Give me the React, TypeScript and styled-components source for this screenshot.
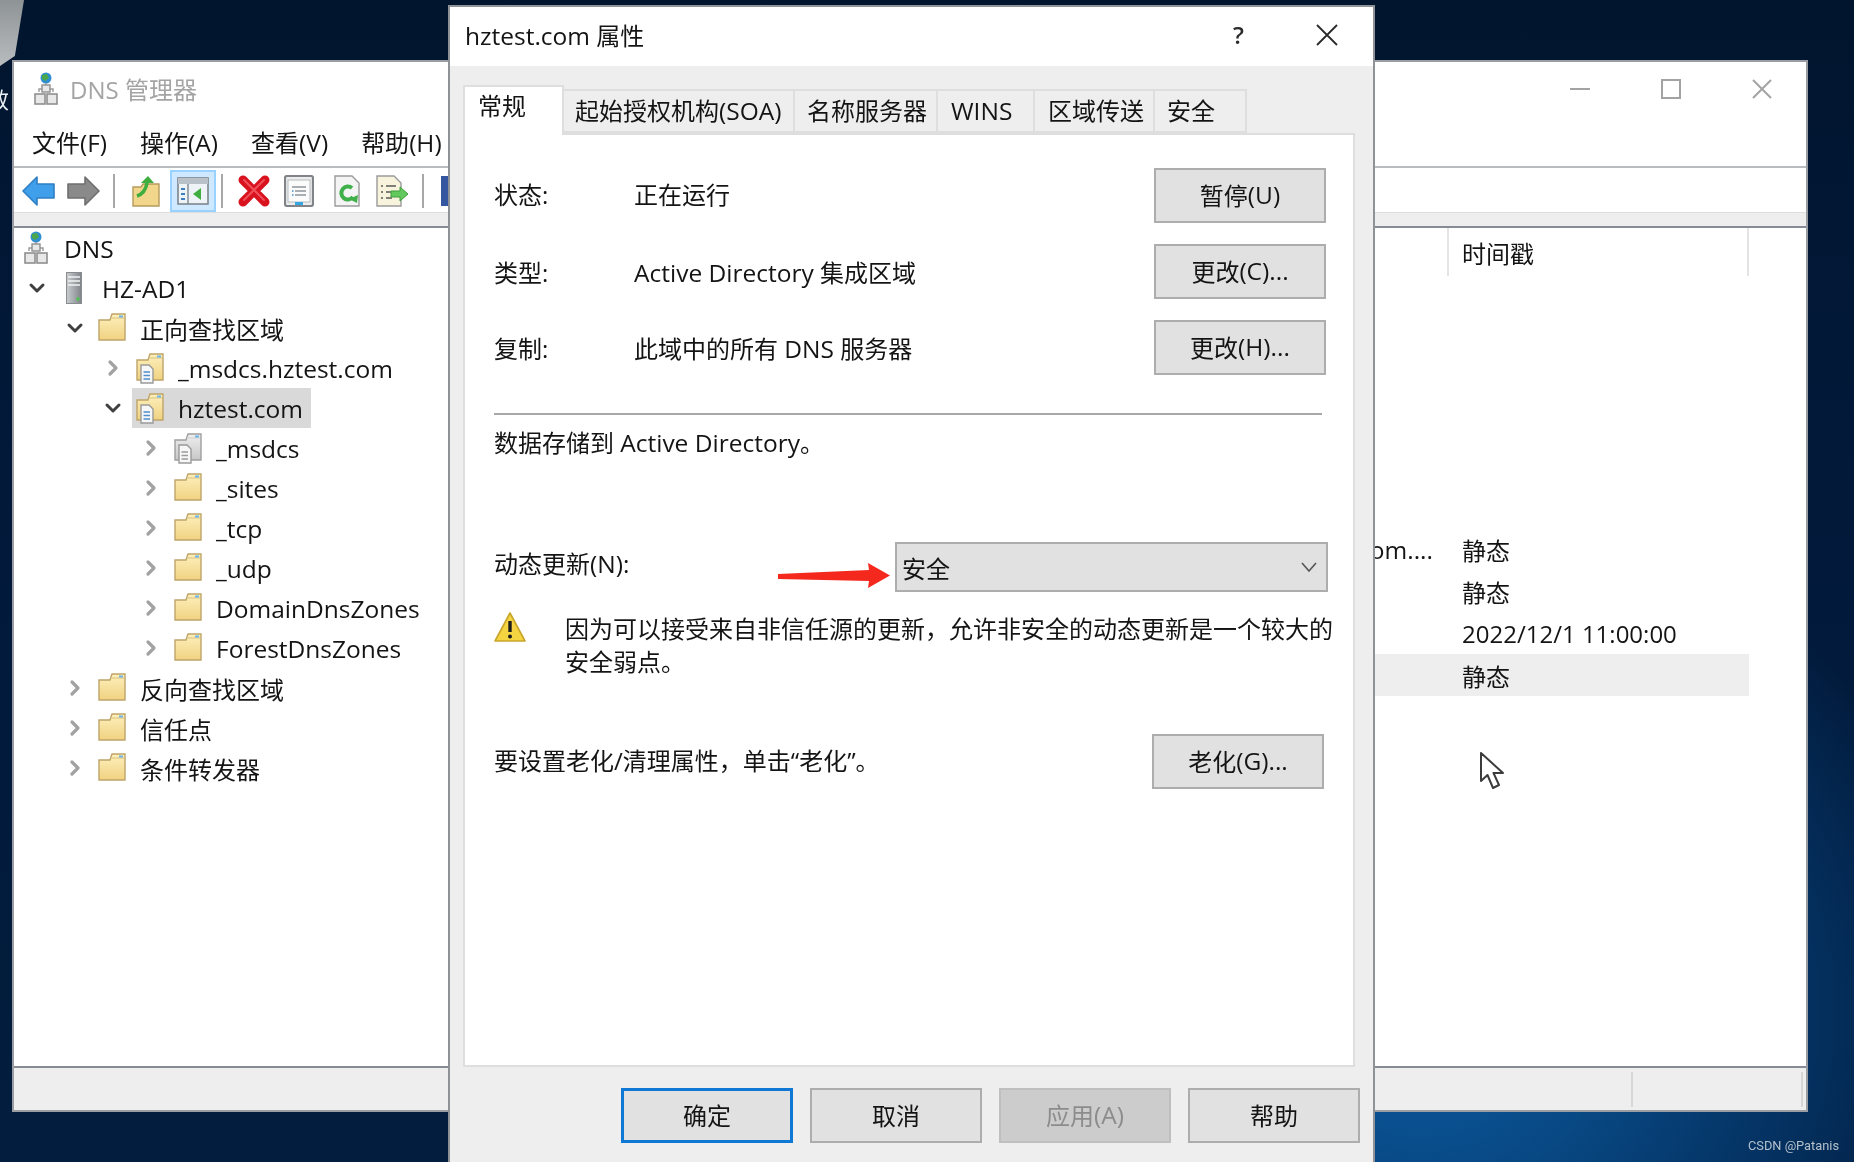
import React from 'react'
import styled, { createGlobalStyle } from 'styled-components'
import { ChevronDown, ChevronRight } from 'lucide-react'

const GlobalStyle = createGlobalStyle`
  html, body {
    margin: 0;
    padding: 0;
    overflow: hidden;
    background: #02162f;
  }
  * {
    box-sizing: border-box;
  }
`

type IconKind = 'dns' | 'server' | 'folder' | 'zone' | 'grayzone'

type TreeNode = {
  level: number
  label: string
  icon: IconKind
  open?: boolean
  selected?: boolean
  latin?: boolean
}

const tree: TreeNode[] = [
  { level: 0, label: 'HZ-AD1', icon: 'server', open: true, latin: true },
  { level: 1, label: '正向查找区域', icon: 'folder', open: true },
  { level: 2, label: '_msdcs.hztest.com', icon: 'zone', latin: true },
  { level: 2, label: 'hztest.com', icon: 'zone', open: true, selected: true, latin: true },
  { level: 3, label: '_msdcs', icon: 'grayzone', latin: true },
  { level: 3, label: '_sites', icon: 'folder', latin: true },
  { level: 3, label: '_tcp', icon: 'folder', latin: true },
  { level: 3, label: '_udp', icon: 'folder', latin: true },
  { level: 3, label: 'DomainDnsZones', icon: 'folder', latin: true },
  { level: 3, label: 'ForestDnsZones', icon: 'folder', latin: true },
  { level: 1, label: '反向查找区域', icon: 'folder' },
  { level: 1, label: '信任点', icon: 'folder' },
  { level: 1, label: '条件转发器', icon: 'folder' },
]

const records = [
  { name: '', stamp: '' },
  { name: '', stamp: '' },
  { name: '', stamp: '' },
  { name: '', stamp: '' },
  { name: '', stamp: '' },
  { name: '', stamp: '' },
  { name: 'om....', stamp: '静态' },
  { name: '', stamp: '静态' },
  { name: '', stamp: '2022/12/1 11:00:00' },
  { name: '', stamp: '静态', hover: true },
]

const DnsIcon = () => (
  <svg width="24" height="34" viewBox="0 0 24 34">
    <circle cx="12" cy="6" r="5.5" fill="#2f8fd0" />
    <path d="M8 3 L13 2 L15 6 L11 9 L8 7Z" fill="#4aa84a" />
    <path d="M12 11 V16 M5 20 V17 H19 V20" fill="none" stroke="#9a9a9a" strokeWidth="1.4" />
    <rect x="8" y="13" width="8" height="7" fill="#e8e8e8" stroke="#8f8f8f" strokeWidth="1.4" />
    <rect x="1" y="22" width="10" height="10" fill="#e8e8e8" stroke="#8f8f8f" strokeWidth="1.6" />
    <rect x="13" y="22" width="10" height="10" fill="#e8e8e8" stroke="#8f8f8f" strokeWidth="1.6" />
  </svg>
)

const ServerIcon = () => (
  <svg width="16" height="32" viewBox="0 0 16 32">
    <defs>
      <linearGradient id="srv" x1="0" x2="1" y1="0" y2="0">
        <stop offset="0" stopColor="#c9cdd0" />
        <stop offset="1" stopColor="#7f8488" />
      </linearGradient>
    </defs>
    <rect x="0.5" y="0.5" width="15" height="31" fill="url(#srv)" stroke="#8a8d90" />
    <path d="M2 5 H14 M2 9 H14 M2 13 H14" stroke="#f2f2f2" strokeWidth="1.6" />
    <circle cx="12" cy="27" r="1.8" fill="#4fc24f" />
  </svg>
)

const FolderIcon = ({ gray, zone }: { gray?: boolean; zone?: boolean }) => {
  const id = gray ? 'fg' : 'fy'
  return (
    <svg width="28" height="32" viewBox="0 0 28 32">
      <defs>
        <linearGradient id={id} x1="0" x2="0" y1="0" y2="1">
          <stop offset="0" stopColor={gray ? '#efefef' : '#fdf0be'} />
          <stop offset="1" stopColor={gray ? '#c8c8c8' : '#f0d280'} />
        </linearGradient>
      </defs>
      <path d="M1 8 H12 L14 2 H27 V28 H1Z" fill={`url(#${id})`} stroke={gray ? '#9f9f9f' : '#bfa468'} strokeWidth="1.4" />
      <path d="M13 6 H26" stroke={gray ? '#d9d9d9' : '#e6cf92'} strokeWidth="1.5" />
      <rect x="21" y="3.5" width="4" height="2" fill="#69b4e8" />
      {zone && (
        <g>
          <path d="M5 13 H13 L17 17 V31 H5Z" fill="#f7f7f7" stroke="#9a9a9a" strokeWidth="1.4" />
          <path d="M7.5 20 H14 M7.5 23.5 H14 M7.5 27 H14" stroke={gray ? '#9a9a9a' : '#4f8fd0'} strokeWidth="1.5" />
        </g>
      )}
    </svg>
  )
}

const TreeIcon = ({ kind }: { kind: IconKind }) => {
  if (kind === 'dns') return <DnsIcon />
  if (kind === 'server') return <ServerIcon />
  if (kind === 'zone') return <FolderIcon zone />
  if (kind === 'grayzone') return <FolderIcon gray zone />
  return <FolderIcon />
}

const ArrowIcon = ({ dir, color, edge }: { dir: 'left' | 'right'; color: string; edge: string }) => (
  <svg width="33" height="30" viewBox="0 0 33 30">
    <path
      d={dir === 'left' ? 'M1 15 L15 1 V8 H32 V22 H15 V29Z' : 'M32 15 L18 1 V8 H1 V22 H18 V29Z'}
      fill={color}
      stroke={edge}
      strokeWidth="1.6"
      strokeLinejoin="round"
    />
  </svg>
)

const UpFolderIcon = () => (
  <svg width="28" height="32" viewBox="0 0 28 32">
    <path d="M1 12 H9 L11 9 H27 V31 H1Z" fill="#f1d68c" stroke="#b59a5c" strokeWidth="1.4" />
    <path d="M5 21 C11 19 14 14 15 8" fill="none" stroke="#3fae3f" strokeWidth="3.6" />
    <path d="M9 8 L16 1 L22 8Z" fill="#3fae3f" />
  </svg>
)

const ConsoleIcon = () => (
  <svg width="32" height="28" viewBox="0 0 32 28">
    <rect x="1" y="1" width="30" height="26" fill="#eef3f7" stroke="#7d868e" strokeWidth="1.6" />
    <rect x="1" y="1" width="30" height="6" fill="#b8c0c8" />
    <path d="M11 7 V27" stroke="#7d868e" strokeWidth="1.4" />
    <path d="M4 12 H8 M4 17 H8 M4 22 H8" stroke="#3f7fc0" strokeWidth="2" />
    <path d="M24 11 V23 L16 17Z" fill="#3fae3f" />
  </svg>
)

const DeleteIcon = () => (
  <svg width="32" height="32" viewBox="0 0 32 32">
    <path d="M5 5 L27 27 M27 5 L5 27" stroke="#d9121f" strokeWidth="9" strokeLinecap="round" />
    <path d="M6 5 L26 25 M26 5 L6 25" stroke="#f0505a" strokeWidth="2" strokeLinecap="round" />
  </svg>
)

const PropsIcon = () => (
  <svg width="30" height="32" viewBox="0 0 30 32">
    <rect x="1" y="1" width="28" height="30" rx="2" fill="#ececec" stroke="#808488" strokeWidth="2.2" />
    <rect x="4" y="5" width="22" height="22" fill="#fbfbfb" stroke="#b5b9bd" />
    <path d="M8 12 H22 M11 16 H22 M11 20 H22" stroke="#8f959a" strokeWidth="1.4" />
    <path d="M8 16 H9.5 M8 20 H9.5" stroke="#3f8fd0" strokeWidth="1.6" />
    <rect x="11" y="27" width="8" height="3" fill="#35a6e0" />
  </svg>
)

const RefreshIcon = () => (
  <svg width="26" height="32" viewBox="0 0 26 32">
    <path d="M1 1 H18 L25 8 V31 H1Z" fill="#f4f4f4" stroke="#9a9a9a" strokeWidth="1.4" />
    <path d="M19 22 A6.5 6.5 0 1 1 18 13" fill="none" stroke="#3fb04a" strokeWidth="4" />
    <path d="M15 24 L24 20 L23 28Z" fill="#3fb04a" />
  </svg>
)

const ExportIcon = () => (
  <svg width="33" height="32" viewBox="0 0 33 32">
    <path d="M1 1 H18 L25 8 V31 H1Z" fill="#f8f3dc" stroke="#9a9a9a" strokeWidth="1.4" />
    <path d="M5 11 H7 M10 11 H20 M5 17 H7 M10 17 H16 M5 23 H7 M10 23 H16" stroke="#5a5a5a" strokeWidth="1.6" />
    <path d="M15 16 H24 V12 L32 19 L24 26 V22 H15Z" fill="#62c95c" stroke="#3f9f3f" />
  </svg>
)

const WarningIcon = () => (
  <WarningGlyph viewBox="0 0 32 30">
    <path d="M16 1 L31 29 H1Z" fill="#f5d442" stroke="#c9a52a" strokeWidth="1.6" strokeLinejoin="round" />
    <path d="M16 9 V20" stroke="#1c1c1c" strokeWidth="3.4" />
    <circle cx="16" cy="24.5" r="2" fill="#1c1c1c" />
  </WarningGlyph>
)

export default function App() {
  return (
    <Stage>
      <GlobalStyle />
      <RecycleBin />
      <DesktopLabel>效</DesktopLabel>

      <MainWindow>
        <MainTitleBar>
          <DnsIcon />
          <MainTitle>DNS 管理器</MainTitle>
          <WindowControls>
            <MinimizeGlyph />
            <MaximizeGlyph />
            <CloseGlyph viewBox="0 0 20 20">
              <path d="M1 1 L19 19 M19 1 L1 19" stroke="#a3a3a3" strokeWidth="2" />
            </CloseGlyph>
          </WindowControls>
        </MainTitleBar>

        <MenuBar>
          <MenuItem>文件<Latin>(F)</Latin></MenuItem>
          <MenuItem>操作<Latin>(A)</Latin></MenuItem>
          <MenuItem>查看<Latin>(V)</Latin></MenuItem>
          <MenuItem>帮助<Latin>(H)</Latin></MenuItem>
        </MenuBar>

        <Toolbar>
          <ToolSlot $left={8}><ArrowIcon dir="left" color="#3f9fea" edge="#2f7fc4" /></ToolSlot>
          <ToolSlot $left={12}><ArrowIcon dir="right" color="#8a8a8a" edge="#6f6f6f" /></ToolSlot>
          <ToolDivider $left={13} />
          <ToolSlot $left={17}><UpFolderIcon /></ToolSlot>
          <ActiveTool><ConsoleIcon /></ActiveTool>
          <ToolDivider $left={5} />
          <ToolSlot $left={15}><DeleteIcon /></ToolSlot>
          <ToolSlot $left={14}><PropsIcon /></ToolSlot>
          <ToolSlot $left={20}><RefreshIcon /></ToolSlot>
          <ToolSlot $left={16}><ExportIcon /></ToolSlot>
          <ToolDivider $left={13} />
          <HelpTool />
        </Toolbar>
        <ToolStrip />

        <Content>
          <TreePane>
            <RootRow>
              <TreeLabelBox>
                <IconBox><DnsIcon /></IconBox>
                <Latin>DNS</Latin>
              </TreeLabelBox>
            </RootRow>
            {tree.map((node, i) => (
              <TreeRow key={i} $level={node.level}>
                <Expander>
                  {node.open ? (
                    <ChevronDown size={30} strokeWidth={3} color="#404040" />
                  ) : (
                    <ChevronRight size={30} strokeWidth={3.2} color="#a2a2a2" />
                  )}
                </Expander>
                <TreeLabelBox $selected={node.selected}>
                  <IconBox><TreeIcon kind={node.icon} /></IconBox>
                  {node.latin ? <Latin>{node.label}</Latin> : node.label}
                </TreeLabelBox>
              </TreeRow>
            ))}
          </TreePane>

          <ListPane>
            <ListHeader>
              <HeaderCell />
              <HeaderCell>时间戳</HeaderCell>
            </ListHeader>
            {records.map((r, i) => (
              <ListRow key={i} $hover={r.hover}>
                <NameCell><Latin>{r.name}</Latin></NameCell>
                <StampCell>{r.stamp}</StampCell>
              </ListRow>
            ))}
          </ListPane>
        </Content>

        <StatusBar>
          <StatusCell $grow />
          <StatusCell />
        </StatusBar>
      </MainWindow>

      <PointerIcon viewBox="0 0 26 40">
        <path
          d="M2 2 V30 L8.5 24 L14 37 L20 34 L14.5 22 L24 22Z"
          fill="#ffffff"
          stroke="#3c3c3c"
          strokeWidth="2"
          strokeLinejoin="round"
        />
      </PointerIcon>

      <Dialog>
        <DialogTitleBar>
          <DialogTitle><Latin>hztest.com</Latin> 属性</DialogTitle>
          <HelpGlyph>?</HelpGlyph>
          <DialogClose viewBox="0 0 22 22">
            <path d="M1 1 L21 21 M21 1 L1 21" stroke="#2a2a2a" strokeWidth="1.8" />
          </DialogClose>
        </DialogTitleBar>

        <DialogBody>
          <Tabs>
            <Tab $active $width={101}>常规</Tab>
            <Tab $width={231}>起始授权机构<Latin>(SOA)</Latin></Tab>
            <Tab $width={143} $pad={12}>名称服务器</Tab>
            <Tab $width={97} $pad={13}><Latin>WINS</Latin></Tab>
            <Tab $width={120} $pad={13}>区域传送</Tab>
            <Tab $width={92} $pad={12}>安全</Tab>
          </Tabs>

          <TabPanel>
            <InfoRow>
              <FieldLabel $lift>状态:</FieldLabel>
              <FieldValue $lift>正在运行</FieldValue>
              <Button>暂停<Latin>(U)</Latin></Button>
            </InfoRow>
            <InfoRow>
              <FieldLabel>类型:</FieldLabel>
              <FieldValue><Latin>Active Directory</Latin> 集成区域</FieldValue>
              <Button>更改<Latin>(C)...</Latin></Button>
            </InfoRow>
            <InfoRow>
              <FieldLabel>复制:</FieldLabel>
              <FieldValue>此域中的所有 <Latin>DNS</Latin> 服务器</FieldValue>
              <Button>更改<Latin>(H)...</Latin></Button>
            </InfoRow>

            <Rule />
            <StorageNote>数据存储到 <Latin>Active Directory</Latin>。</StorageNote>

            <UpdateRow>
              <UpdateLabel>动态更新<Latin>(N):</Latin></UpdateLabel>
              <Combo>
                安全
                <ComboArrow viewBox="0 0 16 10">
                  <path d="M1 1 L8 9 L15 1" fill="none" stroke="#555" strokeWidth="1.6" />
                </ComboArrow>
              </Combo>
              <RedArrow viewBox="0 0 112 25">
                <path d="M0 11 L91 7 L90 0 L112 12.5 L90 25 L91 18 L0 16Z" fill="#f5281e" />
              </RedArrow>
            </UpdateRow>

            <WarningRow>
              <WarningIcon />
              <WarningText>
                因为可以接受来自非信任源的更新，允许非安全的动态更新是一个较大的安全弱点。
              </WarningText>
            </WarningRow>

            <AgingRow>
              <AgingText>要设置老化/清理属性，单击“老化”。</AgingText>
              <Button>老化<Latin>(G)...</Latin></Button>
            </AgingRow>
          </TabPanel>

          <DialogFooter>
            <Button $primary>确定</Button>
            <Button>取消</Button>
            <Button $disabled>应用<Latin>(A)</Latin></Button>
            <Button>帮助</Button>
          </DialogFooter>
        </DialogBody>
      </Dialog>

      <Watermark>CSDN @Patanis</Watermark>
    </Stage>
  )
}

const Stage = styled.div`
  position: relative;
  width: 1854px;
  height: 1162px;
  overflow: hidden;
  filter: blur(0.55px);
  color: #141414;
  font-family: 'Open Sans', 'Noto Sans CJK SC', sans-serif;
  font-size: 24px;
  background:
    radial-gradient(560px 520px at 1420px 1010px, #0c5ba3 0%, #084883 35%, #04305f 70%, rgba(3, 36, 74, 0) 100%),
    linear-gradient(180deg, #01152e 0%, #02193a 40%, #021d3d 100%);
`

const Latin = styled.span`
  font-size: 24.5px;
`

const RecycleBin = styled.div`
  position: absolute;
  left: 0;
  top: 0;
  width: 24px;
  height: 66px;
  background: linear-gradient(180deg, #8e9396, #b8bcbe);
  clip-path: polygon(0 0, 100% 0, 62% 85%, 0 100%);
`

const DesktopLabel = styled.div`
  position: absolute;
  left: -13px;
  top: 82px;
  color: #e8eef4;
  font-size: 22px;
`

const MainWindow = styled.div`
  position: absolute;
  left: 12px;
  top: 60px;
  width: 1796px;
  height: 1052px;
  display: flex;
  flex-direction: column;
  background: #fff;
  border: 2px solid #9a9ea3;
`

const MainTitleBar = styled.div`
  height: 63px;
  flex: none;
  display: flex;
  align-items: center;
  padding: 0 34px 10px 20px;
`

const MainTitle = styled.div`
  margin-left: 12px;
  color: #a4a4a4;
  font-size: 24px;
`

const WindowControls = styled.div`
  margin-left: auto;
  display: flex;
  align-items: center;
  gap: 71px;
`

const MinimizeGlyph = styled.div`
  width: 20px;
  height: 2px;
  background: #a3a3a3;
`

const MaximizeGlyph = styled.div`
  width: 20px;
  height: 20px;
  border: 2px solid #a3a3a3;
`

const CloseGlyph = styled.svg`
  width: 20px;
  height: 20px;
`

const MenuBar = styled.div`
  height: 43px;
  flex: none;
  display: flex;
  gap: 33px;
  padding: 0 0 5px 18px;
  align-items: center;
  border-bottom: 2px solid #b9bcbf;
  white-space: nowrap;
`

const MenuItem = styled.div`
  line-height: 36px;
`

const Toolbar = styled.div`
  height: 44px;
  flex: none;
  display: flex;
  align-items: center;
  padding-top: 2px;
`

const ToolSlot = styled.div<{ $left: number }>`
  margin-left: ${p => p.$left}px;
  display: flex;
`

const ToolDivider = styled.div<{ $left: number }>`
  margin-left: ${p => p.$left}px;
  width: 2px;
  height: 34px;
  background: #a8a8a8;
`

const ActiveTool = styled.div`
  margin-left: 10px;
  width: 46px;
  height: 42px;
  display: flex;
  align-items: center;
  justify-content: center;
  background: #cde8ff;
  border: 2px solid #99d1ff;
`

const HelpTool = styled.div`
  margin-left: 17px;
  width: 30px;
  height: 30px;
  background: #34559f;
`

const ToolStrip = styled.div`
  height: 14px;
  flex: none;
  background: #eeeeee;
  border-top: 1px solid #dedede;
`

const Content = styled.div`
  flex: 1;
  min-height: 0;
  display: flex;
  border-top: 2px solid #868b94;
  border-bottom: 2px solid #868b94;
`

const TreePane = styled.div`
  width: 500px;
  flex: none;
`

const RootRow = styled.div`
  height: 40px;
  display: flex;
  align-items: center;
  padding-left: 4px;
`

const TreeRow = styled.div<{ $level: number }>`
  height: 40px;
  display: flex;
  align-items: center;
  padding-left: ${p => 11 + p.$level * 38}px;
`

const Expander = styled.div`
  width: 24px;
  height: 24px;
  flex: none;
  margin-right: 7px;
  display: flex;
  align-items: center;
  justify-content: center;
`

const TreeLabelBox = styled.div<{ $selected?: boolean }>`
  height: 40px;
  display: flex;
  align-items: center;
  gap: 14px;
  padding: 0 8px 0 4px;
  background: ${p => (p.$selected ? '#d9d9d9' : 'transparent')};
  white-space: nowrap;
`

const IconBox = styled.div`
  width: 28px;
  flex: none;
  display: flex;
  justify-content: center;
`

const ListPane = styled.div`
  flex: 1;
  min-width: 0;
`

const ListHeader = styled.div`
  height: 48px;
  display: grid;
  grid-template-columns: 935px 300px;
`

const HeaderCell = styled.div`
  display: flex;
  align-items: center;
  padding-left: 13px;
  border-right: 2px solid #e4e4e4;
`

const ListRow = styled.div<{ $hover?: boolean }>`
  width: 1235px;
  height: 42px;
  display: grid;
  grid-template-columns: 935px 300px;
  align-items: center;
  background: ${p => (p.$hover ? '#eeeeee' : 'transparent')};
`

const NameCell = styled.div`
  text-align: right;
  padding-right: 16px;
`

const StampCell = styled.div`
  padding-left: 13px;
  white-space: nowrap;
`

const StatusBar = styled.div`
  height: 42px;
  flex: none;
  display: flex;
  padding: 4px 3px 3px 0;
  background: #eeeeee;
`

const StatusCell = styled.div<{ $grow?: boolean }>`
  flex: ${p => (p.$grow ? 1 : 'none')};
  width: 170px;
  border-right: 2px solid #d6d6d6;
`

const PointerIcon = styled.svg`
  position: absolute;
  left: 1479px;
  top: 751px;
  width: 26px;
  height: 40px;
`

const Dialog = styled.div`
  position: absolute;
  left: 448px;
  top: 5px;
  width: 927px;
  height: 1160px;
  display: flex;
  flex-direction: column;
  background: #eeeeee;
  border: 2px solid #8f9296;
`

const DialogTitleBar = styled.div`
  height: 59px;
  flex: none;
  display: flex;
  align-items: center;
  padding: 0 35px 4px 15px;
  background: #fff;
`

const DialogTitle = styled.div`
  flex: 1;
`

const HelpGlyph = styled.div`
  margin-right: 72px;
  font-size: 24px;
  font-weight: 600;
  color: #2a2a2a;
`

const DialogClose = styled.svg`
  width: 22px;
  height: 22px;
`

const DialogBody = styled.div`
  flex: 1;
  min-height: 0;
  display: flex;
  flex-direction: column;
`

const Tabs = styled.div`
  flex: none;
  height: 67px;
  display: flex;
  align-items: flex-end;
  padding-left: 13px;
`

const Tab = styled.div<{ $active?: boolean; $width: number; $pad?: number }>`
  position: relative;
  z-index: ${p => (p.$active ? 1 : 0)};
  width: ${p => p.$width}px;
  height: ${p => (p.$active ? 50 : 44)}px;
  margin-bottom: ${p => (p.$active ? -2 : 0)}px;
  padding: ${p => (p.$active ? '2px 0 0 13px' : `3px 0 0 ${p.$pad ?? 11}px`)};
  background: ${p => (p.$active ? '#fff' : '#eeeeee')};
  border: 2px solid #dedede;
  border-bottom: ${p => (p.$active ? 'none' : '2px solid #dedede')};
  border-left-width: ${p => (p.$active ? 2 : 0)}px;
  line-height: 34px;
  white-space: nowrap;
`

const TabPanel = styled.div`
  height: 934px;
  flex: none;
  margin: 0 18px 0 13px;
  padding: 33px 27px 0 29px;
  background: #fff;
  border: 2px solid #dedede;
`

const InfoRow = styled.div`
  display: flex;
  align-items: center;
  height: 55px;
  margin-bottom: 21px;
`

const FieldLabel = styled.div<{ $lift?: boolean }>`
  width: 140px;
  padding-bottom: ${p => (p.$lift ? 4 : 0)}px;
`

const FieldValue = styled.div<{ $lift?: boolean }>`
  flex: 1;
  padding-bottom: ${p => (p.$lift ? 4 : 0)}px;
`

const Button = styled.div<{ $primary?: boolean; $disabled?: boolean }>`
  width: 172px;
  height: 55px;
  flex: none;
  display: flex;
  align-items: center;
  justify-content: center;
  padding-bottom: 2px;
  white-space: pre;
  background: ${p => (p.$disabled ? '#cccccc' : '#e1e1e1')};
  color: ${p => (p.$disabled ? '#8c8c8c' : '#141414')};
  border: ${p => (p.$primary ? '3px solid #0f78d4' : p.$disabled ? '2px solid #bfbfbf' : '2px solid #adadad')};
`

const Rule = styled.div`
  height: 2px;
  width: 828px;
  margin-top: 38px;
  background: #a8a8a8;
`

const StorageNote = styled.div`
  margin-top: 11px;
  line-height: 33px;
`

const UpdateRow = styled.div`
  position: relative;
  margin-top: 83px;
  margin-right: -2px;
  display: flex;
  align-items: flex-start;
`

const UpdateLabel = styled.div`
  width: 401px;
  flex: none;
  padding-top: 5px;
  line-height: 33px;
`

const Combo = styled.div`
  flex: 1;
  height: 50px;
  display: flex;
  align-items: center;
  justify-content: space-between;
  padding: 0 9px 0 5px;
  background: #e1e1e1;
  border: 2px solid #adadad;
`

const ComboArrow = styled.svg`
  width: 16px;
  height: 10px;
`

const RedArrow = styled.svg`
  position: absolute;
  left: 284px;
  top: 21px;
  width: 112px;
  height: 25px;
`

const WarningRow = styled.div`
  display: flex;
  align-items: flex-start;
  gap: 39px;
  margin-top: 20px;
`

const WarningGlyph = styled.svg`
  width: 32px;
  height: 30px;
  flex: none;
`

const WarningText = styled.div`
  width: 772px;
  flex: none;
  line-height: 33px;
`

const AgingRow = styled.div`
  display: flex;
  align-items: center;
  justify-content: space-between;
  margin: 56px 2px 0 0;
`

const AgingText = styled.div`
  white-space: nowrap;
  padding-bottom: 4px;
`

const DialogFooter = styled.div`
  flex: none;
  display: flex;
  justify-content: flex-end;
  gap: 17px;
  padding: 21px 13px 0 0;
`

const Watermark = styled.div`
  position: absolute;
  left: 1748px;
  top: 1137px;
  color: #b4c0cc;
  font-family: 'Roboto', sans-serif;
  font-size: 12.8px;
  line-height: 18px;
`
